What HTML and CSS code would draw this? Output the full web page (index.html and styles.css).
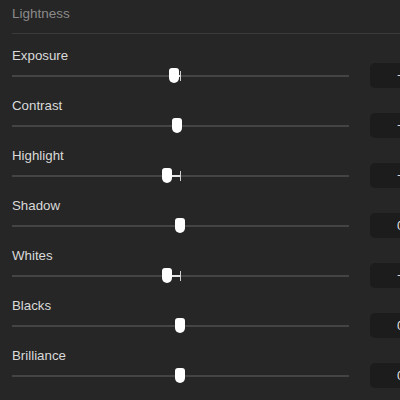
FILE: index.html
```html
<!DOCTYPE html>
<html>
<head>
<meta charset="utf-8">
<link rel="stylesheet" href="styles.css">
</head>
<body>
<div class="panel">
  <div class="header">Lightness</div>
  <div class="rows">
    <div class="row">
      <div class="label">Exposure</div>
      <div class="slider-row">
        <div class="track">
          <div class="fill" style="left:161.5px;width:7px"></div>
          <div class="tick"></div>
          <div class="thumb" style="left:161.5px"></div>
        </div>
        <div class="value">−</div>
      </div>
    </div>
    <div class="row">
      <div class="label">Contrast</div>
      <div class="slider-row">
        <div class="track">
          <div class="thumb" style="left:165px"></div>
        </div>
        <div class="value">−</div>
      </div>
    </div>
    <div class="row">
      <div class="label">Highlight</div>
      <div class="slider-row">
        <div class="track">
          <div class="fill" style="left:155px;width:13px"></div>
          <div class="tick"></div>
          <div class="thumb" style="left:155px"></div>
        </div>
        <div class="value">−</div>
      </div>
    </div>
    <div class="row">
      <div class="label">Shadow</div>
      <div class="slider-row">
        <div class="track">
          <div class="thumb" style="left:168px"></div>
        </div>
        <div class="value">0</div>
      </div>
    </div>
    <div class="row">
      <div class="label">Whites</div>
      <div class="slider-row">
        <div class="track">
          <div class="fill" style="left:155px;width:13px"></div>
          <div class="tick"></div>
          <div class="thumb" style="left:155px"></div>
        </div>
        <div class="value">−</div>
      </div>
    </div>
    <div class="row">
      <div class="label">Blacks</div>
      <div class="slider-row">
        <div class="track">
          <div class="thumb" style="left:168px"></div>
        </div>
        <div class="value">0</div>
      </div>
    </div>
    <div class="row">
      <div class="label">Brilliance</div>
      <div class="slider-row">
        <div class="track">
          <div class="thumb" style="left:168px"></div>
        </div>
        <div class="value">0</div>
      </div>
    </div>
  </div>
</div>
</body>
</html>
```
FILE: styles.css
```css
html, body {
  margin: 0;
  padding: 0;
  background: #262626;
  overflow: hidden;
}
body {
  width: 400px;
  height: 400px;
  font-family: "Liberation Sans", Arial, sans-serif;
  font-size: 13px;
  line-height: 16px;
}
.panel {
  padding-left: 12px;
}
.header {
  color: #8a8a8a;
  font-size: 13.5px;
  font-weight: 500;
  padding-top: 6px;
  padding-bottom: 11px;
  border-bottom: 1px solid #3a3a3a;
}
.rows {
  padding-top: 12px;
}
.row {
  height: 50px;
  display: flex;
  flex-direction: column;
}
.label {
  color: #dadada;
  font-size: 13.3px;
  padding-top: 2px;
  height: 16px;
}
.slider-row {
  margin-top: -1px;
  height: 25px;
  display: flex;
  align-items: center;
  gap: 21px;
}
.track {
  position: relative;
  width: 337px;
  height: 2px;
  background: #444444;
  flex: none;
}
.fill {
  position: absolute;
  top: 0;
  height: 2px;
  background: #e6e6e6;
}
.tick {
  position: absolute;
  left: 168px;
  top: -4px;
  width: 1px;
  height: 10px;
  background: #d0d0d0;
}
.thumb {
  position: absolute;
  top: -7px;
  width: 10px;
  height: 15px;
  margin-left: -5px;
  background: #ffffff;
  border-radius: 3px 3px 5px 5px;
}
.value {
  flex: none;
  width: 60px;
  height: 25px;
  box-sizing: border-box;
  padding-left: 27px;
  background: #1c1c1c;
  border-radius: 5px;
  color: #e0e0e0;
  line-height: 25px;
}
```
